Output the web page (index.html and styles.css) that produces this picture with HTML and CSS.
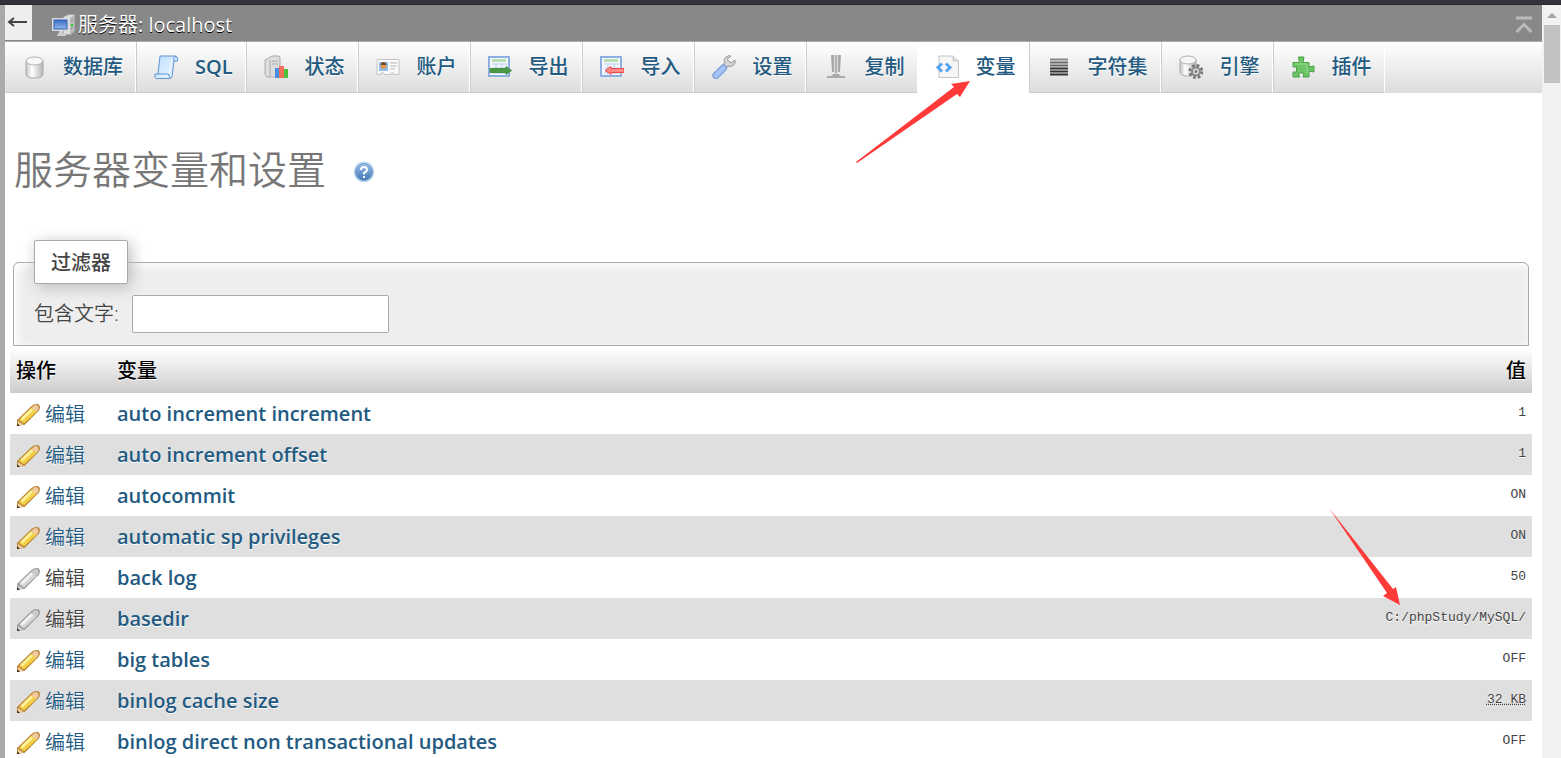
FILE: index.html
```html
<!DOCTYPE html>
<html lang="zh-CN">
<head>
    <meta charset="UTF-8">
    <meta name="viewport" content="width=device-width, initial-scale=1.0">
    <title>服务器变量和设置</title>
    <link rel="stylesheet" href="styles.css">
</head>
<body>
    <svg class="defs" width="0" height="0" aria-hidden="true">
        <defs>
            <linearGradient id="metal" x1="0" x2="1" y1="0" y2="0">
                <stop offset="0" stop-color="#c4c4c4"/><stop offset=".35" stop-color="#fff"/><stop offset="1" stop-color="#b4b4b4"/>
            </linearGradient>
            <linearGradient id="sky" x1="0" x2="1" y1="0" y2="1">
                <stop offset="0" stop-color="#b8dcff"/><stop offset="1" stop-color="#f2f9ff"/>
            </linearGradient>
            <linearGradient id="screen" x1="0" x2="0" y1="0" y2="1">
                <stop offset="0" stop-color="#3b6fc4"/><stop offset="1" stop-color="#8fb5ea"/>
            </linearGradient>
            <linearGradient id="helpFill" x1="0" x2="0" y1="0" y2="1">
                <stop offset="0" stop-color="#9dbfe6"/><stop offset="1" stop-color="#3f78b8"/>
            </linearGradient>
            <symbol id="pencil" viewBox="0 0 24 24">
                <path d="M1 22.500V17L15.500 3Q19 0 23 1.500Q25 5 22.500 8L8.500 22Z" fill="var(--edge)"/>
                <path d="M3 17L15.500 4.500L20.500 9L8 20.500Z" fill="var(--body)"/>
                <path d="M5.500 16.500L16 6.500" stroke="var(--shine)" stroke-width="3" fill="none"/>
                <path d="M15.500 5L18 2.500Q20 1.500 22 3Q23 5 22 7L20 9Z" fill="var(--tip)"/>
                <path d="M2 18L7.500 21.500L3 22.500H1.500Z" fill="var(--tip)"/>
                <path d="M1 20L4 23H1Z" fill="var(--lead)"/>
            </symbol>
        </defs>
    </svg>

    <div class="window-edge"></div>
    <div class="frame">
        <div class="nav-edge"></div>
        <main class="page">
            <div class="serverinfo">
                <button class="nav-toggle" type="button" title="显示面板">
                    <svg width="20" height="12" viewBox="0 0 20 12"><path d="M20 5H2M7 1L2 5L7 9" fill="none" stroke="#444" stroke-width="2"/></svg>
                </button>
                <a class="server-link" href="#">
                    <svg width="24" height="24" viewBox="0 0 24 24">
                        <path d="M11 4L17 1H22L23 2V18L19 22H11Z" fill="#aaa"/>
                        <path d="M12 4L17 2H22L18 5V21H12Z" fill="#ddd"/>
                        <path d="M18 5L22 2.500V18L18 21Z" fill="#bcbcbc"/>
                        <path d="M18.500 8L21.500 6M18.500 16L21.500 14" stroke="#888"/>
                        <rect x="19" y="11" width="2" height="2" fill="#2c2"/>
                        <rect x="0" y="5" width="17" height="13" rx="1" fill="#d9dde3"/>
                        <rect x="2" y="7" width="13" height="9" fill="url(#screen)" stroke="#3560a8"/>
                        <path d="M7 18H11V20L14 22V23H5V22L7 20Z" fill="#cfcfcf"/>
                    </svg>
                    <span>服务器: localhost</span>
                </a>
                <button class="go-top" type="button" title="回到顶部">
                    <svg width="18" height="18" viewBox="0 0 18 18"><path d="M1 2H17M1.500 16L9 8.500L16.500 16" fill="none" stroke="#bbb" stroke-width="3"/></svg>
                </button>
            </div>

            <nav class="topmenu">
                <a class="tab" href="#">
                    <svg width="24" height="24" viewBox="0 0 24 24">
                        <path d="M4 6V19Q4 23 12.500 23T21 19V6Z" fill="url(#metal)" stroke="#aaa"/>
                        <ellipse cx="12.500" cy="6" rx="8.500" ry="4" fill="#f7f7f7" stroke="#b0b0b0"/>
                    </svg>
                    <span>数据库</span>
                </a>
                <a class="tab latin" href="#">
                    <svg width="24" height="24" viewBox="0 0 24 24">
                        <path d="M6 1H21Q23.500 1 23.500 4V6H20L18 22Q17 23.500 15 23.500H2Q.5 23.500 1 19H4Z" fill="url(#sky)" stroke="#5f95d2"/>
                        <path d="M20 6Q19 1 22 1.500M4 19H15Q14 23 17 23" fill="none" stroke="#5f95d2"/>
                        <path d="M15 19L18 3" stroke="#fff" opacity=".6"/>
                    </svg>
                    <span>SQL</span>
                </a>
                <a class="tab" href="#">
                    <svg width="24" height="24" viewBox="0 0 24 24">
                        <path d="M1 5L8 1H15L16 2V18L11 22H3L1 19Z" fill="#ddd" stroke="#aaa"/>
                        <path d="M6 5V21M8 6H14M8 9H14" stroke="#aaa"/>
                        <rect x="11" y="13" width="4" height="10" fill="#4a8ee0"/>
                        <rect x="15" y="11" width="5" height="12" fill="#f0705c"/>
                        <rect x="20" y="14" width="4" height="9" fill="#4cbf3c"/>
                    </svg>
                    <span>状态</span>
                </a>
                <a class="tab" href="#">
                    <svg width="24" height="24" viewBox="0 0 24 24">
                        <path d="M1 4.500H23V19.500H18V18H15V19.500H8V18H5V19.500H1Z" fill="#fafafa" stroke="#c4c4c4"/>
                        <rect x="3" y="7" width="9" height="9" fill="#8fbdf0"/>
                        <circle cx="7.500" cy="11" r="3" fill="#d99a5b"/>
                        <path d="M4.500 10Q5 7 7.500 7T10.500 10Z" fill="#754c24"/>
                        <path d="M14 8H21M14 11H21M14 14H19" stroke="#b5b5b5"/>
                    </svg>
                    <span>账户</span>
                </a>
                <a class="tab" href="#">
                    <svg width="24" height="24" viewBox="0 0 24 24">
                        <rect x="1" y="2" width="20" height="19" fill="#f5f9ff" stroke="#8cb0e2" stroke-width="2"/>
                        <rect x="4" y="4" width="14" height="3" fill="#b7dfae"/>
                        <path d="M4 9H19M4 13H19M4 18H19M8 9V19M14 9V19" stroke="#b6cced"/>
                        <path d="M2 13.500H18V11.500L23.500 15.500L18 19.500V17.500H2Z" fill="#4a9a45" stroke="#4a8f48"/>
                    </svg>
                    <span>导出</span>
                </a>
                <a class="tab" href="#">
                    <svg width="24" height="24" viewBox="0 0 24 24">
                        <rect x="1" y="2" width="20" height="19" fill="#f5f9ff" stroke="#8cb0e2" stroke-width="2"/>
                        <rect x="4" y="4" width="14" height="3" fill="#b7dfae"/>
                        <path d="M4 9H19M4 13H19M4 18H19M8 9V19M14 9V19" stroke="#b6cced"/>
                        <path d="M24 13.500H11V11.500L5 15.500L11 19.500V17.500H24Z" fill="#ff8a84" stroke="#f04a4a"/>
                    </svg>
                    <span>导入</span>
                </a>
                <a class="tab" href="#">
                    <svg width="24" height="24" viewBox="0 0 24 24">
                        <path d="M19 1L15 4.500L19 8L23 5Q24 9 20.500 11Q18 12 16 11L13 14L10 11L12.500 8Q11 4 14 2Q16.500 0 19 1Z" fill="#d4d4d4" stroke="#999"/>
                        <path d="M4 20.500L11.500 13" stroke="#6c93d8" stroke-width="7" stroke-linecap="round"/>
                        <path d="M4 20.500L11.500 13" stroke="#a5c3f3" stroke-width="5" stroke-linecap="round"/>
                    </svg>
                    <span>设置</span>
                </a>
                <a class="tab" href="#">
                    <svg width="24" height="24" viewBox="0 0 24 24">
                        <path d="M7 0H10V17H8ZM14 0H17L16 17H14Z" fill="#aaa"/>
                        <path d="M10 0H14V19H10Z" fill="#ddd"/>
                        <path d="M12 0V18" stroke="#888"/>
                        <path d="M9 19H15L16 21H21V23H3V21H8Z" fill="#aaa"/>
                    </svg>
                    <span>复制</span>
                </a>
                <a class="tab active" href="#">
                    <svg width="24" height="24" viewBox="0 0 24 24">
                        <path d="M4 1H18L23.500 6V22.500H4Z" fill="#f6f6f6" stroke="#c4c4c4"/>
                        <path d="M18 1V6H23.500" fill="#ddd" stroke="#c4c4c4"/>
                        <path d="M7 8.500L3 12.500L7 16.500M11 8.500L15 12.500L11 16.500" fill="none" stroke="#55a5f4" stroke-width="3"/>
                    </svg>
                    <span>变量</span>
                </a>
                <a class="tab" href="#">
                    <svg width="24" height="24" viewBox="0 0 24 24">
                        <path d="M3 4.500H21" stroke="#888" stroke-width="2"/>
                        <path d="M3 7.500H21M3 10.500H21" stroke="#666" stroke-width="2"/>
                        <path d="M3 13.500H21M3 16.500H21M3 19.500H21" stroke="#333" stroke-width="2"/>
                    </svg>
                    <span>字符集</span>
                </a>
                <a class="tab" href="#">
                    <svg width="24" height="24" viewBox="0 0 24 24">
                        <path d="M1 5V17Q1 21 9 21T17 17V5Z" fill="url(#metal)" stroke="#aaa"/>
                        <ellipse cx="9" cy="5" rx="8" ry="4" fill="#f7f7f7" stroke="#b0b0b0"/>
                        <circle cx="17" cy="16.500" r="6" fill="none" stroke="#777" stroke-width="3" stroke-dasharray="2.700 2"/>
                        <circle cx="17" cy="16.500" r="4" fill="#ddd" stroke="#888" stroke-width="2"/>
                        <circle cx="17" cy="16.500" r="1.500" fill="#777"/>
                    </svg>
                    <span>引擎</span>
                </a>
                <a class="tab" href="#">
                    <svg width="24" height="24" viewBox="0 0 24 24">
                        <path d="M2 7.500H8.500L7.500 2H13L12 7.500H18V12L23 11V17L18 16V22H12L13 18H7.500L8.500 22H2V17H5.500V12H2Z" fill="#6cc467" stroke="#4ba347" stroke-linejoin="round"/>
                        <path d="M4 9H16V19" fill="none" stroke="#9bdf95"/>
                    </svg>
                    <span>插件</span>
                </a>
            </nav>

            <div class="content">
                <h1>
                    服务器变量和设置
                    <a class="help" href="#" title="文档">
                        <svg width="22" height="22" viewBox="0 0 22 22">
                            <circle cx="11" cy="11" r="10.500" fill="#c9dcf0"/>
                            <circle cx="11" cy="11" r="8.500" fill="url(#helpFill)" stroke="#6b9bd0"/>
                            <path d="M8 9Q8 6 11 6T14 9Q14 10.500 11 12V13.500M11 15V17" fill="none" stroke="#fff" stroke-width="2"/>
                        </svg>
                    </a>
                </h1>

                <fieldset class="filter">
                    <legend>过滤器</legend>
                    <label for="filterText">包含文字:</label>
                    <input type="text" id="filterText">
                </fieldset>

                <table class="variables">
                    <thead>
                        <tr>
                            <th class="action">操作</th>
                            <th>变量</th>
                            <th class="value">值</th>
                        </tr>
                    </thead>
                    <tbody id="variablesBody">
                    </tbody>
                </table>
            </div>
        </main>

        <div class="scrollbar">
            <span class="scroll-up"></span>
            <span class="scroll-thumb"></span>
        </div>
    </div>

    <svg class="arrow arrow-tab" width="114" height="82" viewBox="0 0 114 82">
        <path d="M0 81L98 6L95 3L114 0L104 16L101 13L1 82Z"/>
    </svg>
    <svg class="arrow arrow-value" width="72" height="98" viewBox="0 0 72 98">
        <path d="M0 0L64 81L67 79L71 97L54 88L58 85Z"/>
    </svg>

    <script src="script.js"></script>
</body>
</html>
```

FILE: styles.css
```css
* {
    box-sizing: border-box;
}

body {
    margin: 0;
    height: 100vh;
    display: flex;
    flex-direction: column;
    overflow: hidden;
    position: relative;
    background: #fff;
    color: #444;
    font-family: "Open Sans", "Noto Sans", "Noto Sans CJK SC", sans-serif;
    font-size: 20px;
    line-height: 28px;
}

a {
    color: #235a81;
    text-decoration: none;
}

button {
    border: 0;
    padding: 0;
    background: none;
}

svg {
    display: block;
    flex: none;
}

.defs {
    position: absolute;
}

.window-edge {
    flex: none;
    height: 5px;
    background: #323338;
    border-bottom: 1px solid #292a2c;
}

.frame {
    flex: 1;
    min-height: 0;
    display: flex;
}

.nav-edge {
    width: 5px;
    background: #aaa;
}

.page {
    flex: 1;
    min-width: 0;
    overflow: hidden;
}

/* breadcrumb bar */
.serverinfo {
    display: flex;
    align-items: center;
    height: 37px;
    background: #888;
    border-bottom: 1px solid #aaa;
}

.nav-toggle {
    display: flex;
    align-items: center;
    align-self: flex-start;
    width: 27px;
    height: 35px;
    padding-left: 2px;
    background: #eee;
}

.server-link {
    display: flex;
    align-items: center;
    gap: 2px;
    margin-left: 20px;
    padding-top: 4px;
    color: #fff;
    text-shadow: 0 1px 0 #000;
}

.go-top {
    margin-left: auto;
    margin-right: 9px;
    padding-top: 4px;
}

/* tabs */
.topmenu {
    display: flex;
    height: 51px;
    background: linear-gradient(#fff, #dcdcdc);
}

.tab {
    display: flex;
    align-items: center;
    gap: 17px;
    padding: 0 12px 0 17px;
    border-left: 1px solid #ccc;
    border-right: 1px solid #fff;
    border-bottom: 1px solid #ccc;
    font-weight: 500;
    white-space: nowrap;
    text-shadow: 0 1px 0 #fff;
}

.tab:first-child {
    border-left: 0;
}

.tab:last-child {
    border-right-color: #fff;
}

.tab.latin {
    font-weight: 600;
}

.tab.active {
    background: #fff;
    border-color: #fff;
    border-left: 0;
}

/* content */
.content {
    padding: 0 10px 0 5px;
}

h1 {
    display: flex;
    align-items: center;
    gap: 27px;
    margin: 0;
    padding: 48px 0 43px 4px;
    color: #777;
    font-size: 39px;
    font-weight: 350;
    line-height: 56px;
}

.help {
    padding-top: 6px;
}

.filter {
    display: flex;
    align-items: center;
    margin: 0 3px;
    padding: 11px 20px 12px;
    background: #eee;
    border: 1px solid #aaa;
    border-radius: 6px 6px 0 0;
    box-shadow: 3px 3px 10px #fff inset;
    font-weight: 350;
}

.filter legend {
    padding: 8px 16px 6px;
    background: #fff;
    border: 1px solid #aaa;
    border-radius: 2px;
    box-shadow: 3px 3px 15px #bbb;
    font-weight: 500;
}

.filter input {
    width: 257px;
    height: 38px;
    margin-left: 13px;
    padding: 4px;
    border: 1px solid #aaa;
    border-radius: 2px;
    background: #fff;
    color: #555;
    font: inherit;
}

.variables {
    width: 100%;
    margin-top: 3px;
    border-collapse: collapse;
}

.variables th,
.variables td {
    height: 41px;
    padding: 0 6px;
    text-align: left;
    text-shadow: 0 1px 0 #fff;
}

.variables th {
    height: 44px;
    color: #000;
    font-weight: 500;
    background: linear-gradient(#fff, #ccc);
}

.variables tbody tr:nth-child(even) {
    background: #dfdfdf;
}

.variables .action {
    width: 101px;
}

.variables td.action {
    padding-top: 2px;
    font-weight: 350;
}

.variables .name {
    color: #235a81;
    font-weight: 600;
}

.variables .value {
    text-align: right;
}

.variables td.value {
    padding-bottom: 2px;
    font-family: "Liberation Mono", monospace;
    font-size: 13px;
}

.edit {
    display: flex;
    align-items: center;
    gap: 5px;
    --edge: #b98436;
    --body: #f3cf45;
    --shine: #fdf09a;
    --tip: #f2cba0;
    --lead: #4a3207;
}

.edit.readonly {
    color: #444;
    --edge: #999;
    --body: #d6d6d6;
    --shine: #f2f2f2;
    --tip: #ccc;
    --lead: #333;
}

abbr {
    text-decoration: underline dotted;
}

/* scrollbar */
.scrollbar {
    display: flex;
    flex-direction: column;
    align-items: center;
    width: 19px;
    padding-top: 8px;
    background: #f1f1f1;
}

.scroll-up {
    border: 5px solid transparent;
    border-top: 0;
    border-bottom-color: #a3a3a3;
}

.scroll-thumb {
    width: 16px;
    height: 58px;
    margin-top: 7px;
    background: #c1c1c1;
}

/* marker arrows over the page */
.arrow {
    position: absolute;
    fill: #ff3b39;
    pointer-events: none;
}

.arrow-tab {
    left: 856px;
    top: 81px;
}

.arrow-value {
    left: 1329px;
    top: 508px;
}
```

FILE: script.js
```js
const variables = [
    { name: 'auto increment increment', value: '1', editable: true },
    { name: 'auto increment offset', value: '1', editable: true },
    { name: 'autocommit', value: 'ON', editable: true },
    { name: 'automatic sp privileges', value: 'ON', editable: true },
    { name: 'back log', value: '50', editable: false },
    { name: 'basedir', value: 'C:/phpStudy/MySQL/', editable: false },
    { name: 'big tables', value: 'OFF', editable: true },
    { name: 'binlog cache size', value: '<abbr title="32768">32 KB</abbr>', editable: true },
    { name: 'binlog direct non transactional updates', value: 'OFF', editable: true }
];

const filterText = document.getElementById('filterText');
const variablesBody = document.getElementById('variablesBody');
const pencil = '<svg width="24" height="24"><use href="#pencil"></use></svg>';

function displayVariables(items) {
    variablesBody.innerHTML = '';

    items.forEach(item => {
        const row = document.createElement('tr');
        const edit = item.editable
            ? `<a class="edit" href="#">${pencil}<span>编辑</span></a>`
            : `<span class="edit readonly">${pencil}<span>编辑</span></span>`;
        row.innerHTML = `
            <td class="action">${edit}</td>
            <td class="name">${item.name}</td>
            <td class="value">${item.value}</td>
        `;
        variablesBody.appendChild(row);
    });
}

displayVariables(variables);

filterText.addEventListener('input', (e) => {
    const term = e.target.value.toLowerCase();
    displayVariables(variables.filter(item => item.name.includes(term)));
});
```
